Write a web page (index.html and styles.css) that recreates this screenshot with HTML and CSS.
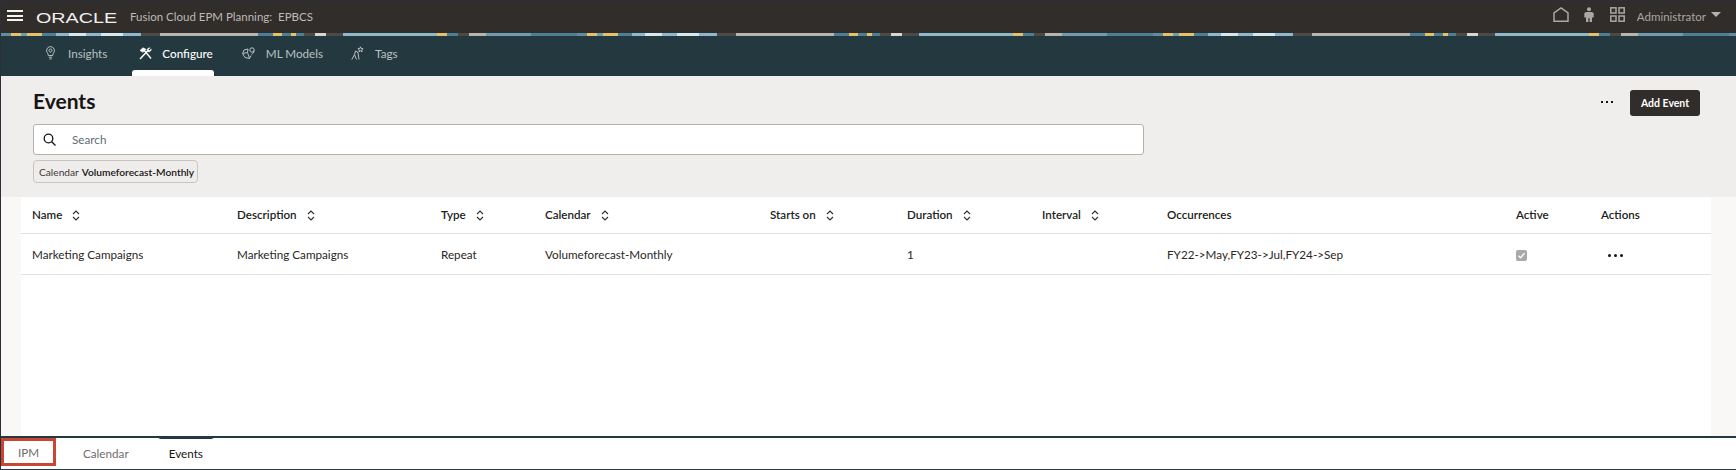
FILE: index.html
```html
<!DOCTYPE html>
<html lang="en">
<head>
<meta charset="utf-8">
<title>Events</title>
<link rel="stylesheet" href="styles.css">
</head>
<body>
<div class="app">
  <header class="topbar">
    <button class="hamburger" aria-label="Menu"><span></span><span></span><span></span></button>
    <span class="logo-box"><span class="logo">ORACLE</span></span>
    <span class="product">Fusion Cloud EPM Planning:&nbsp; EPBCS</span>
    <div class="top-actions">
      <svg class="ico-home" width="16" height="15" viewBox="0 0 16 15"><path d="M1 14.200V5.800L8 1l7 4.800v8.400z" fill="none" stroke="#aaa7a4" stroke-width="1.500"/></svg>
      <svg class="ico-person" width="10" height="15" viewBox="0 0 10 15"><circle cx="5" cy="2.200" r="2" fill="#aaa7a4"/><path d="M2 5h6l1.700 1.200v4.300H8V15H5.600v-3.800h-1.200V15H2v-4.500H.3V6.200z" fill="#aaa7a4"/></svg>
      <svg class="ico-grid" width="15" height="15" viewBox="0 0 15 15"><g fill="none" stroke="#aaa7a4" stroke-width="1.500"><rect x=".8" y=".8" width="5.200" height="5.200"/><rect x="9" y=".8" width="5.200" height="5.200"/><rect x=".8" y="9" width="5.200" height="5.200"/><rect x="9" y="9" width="5.200" height="5.200"/></g></svg>
      <span class="user">Administrator</span>
      <span class="caret"></span>
    </div>
  </header>
  <div class="strip"></div>
  <nav class="nav">
    <a class="nav-item item-insights">
      <svg width="9" height="14" viewBox="0 0 9 14"><g fill="none" stroke="#b9c0c2" stroke-width="1"><path d="M4.500.6A4 4 0 0 0 1.800 7.500l.5 2h4.400l.5-2A4 4 0 0 0 4.500.6z"/><circle cx="4.500" cy="4.500" r="1.500"/><path d="M2.800 11.200h3.400M3.400 13h2.200"/></g></svg>
      <span>Insights</span>
    </a>
    <a class="nav-item active item-configure">
      <svg width="13" height="13" viewBox="0 0 13 13"><g fill="none" stroke="#fff" stroke-width="1.400"><path d="M1 12 8.500 4"/><path d="M4.500 2.500 12 11.500"/><path d="M1 3.500 4 .8l3 1.500-3 3z" fill="#fff" stroke-width=".6"/><path d="M12.300 1.800 10.500 3.500 9.500 2.500 11 .8a2.700 2.700 0 0 0-3 3l1 1a2.700 2.700 0 0 0 3.300-3z" fill="#fff" stroke-width=".4"/></g></svg>
      <span>Configure</span>
    </a>
    <a class="nav-item item-ml">
      <svg width="13" height="12" viewBox="0 0 13 12"><g fill="none" stroke="#b9c0c2" stroke-width="1"><path d="M6 2 2 3 .6 6.500 3 10.500l4.500 1 1.500-3"/><path d="M.6 6.500 5.500 5.500 7.500 11.500M5.500 5.500 6 2"/><circle cx="10" cy="3" r="2.200"/><path d="M12 3.500c0 2-1 3-2.500 4"/></g></svg>
      <span>ML Models</span>
    </a>
    <a class="nav-item item-tags">
      <svg width="13" height="14" viewBox="0 0 13 14"><g fill="none" stroke="#b9c0c2" stroke-width="1"><path d="M.8 13.500 3.500 8.500 4.500 5 7 6.500 8 13.500"/><path d="M3.500 8.500 5.500 13.500"/><path d="M9.500.8l.7 1.700 1.900.2-1.400 1.200.4 1.900-1.600-1-1.600 1 .4-1.900L6.900 2.700l1.900-.2z"/></g></svg>
      <span>Tags</span>
    </a>
  </nav>
  <section class="page-head">
    <div class="title-row">
      <h1>Events</h1>
      <div class="head-actions">
        <span class="dots dots-small"><i></i><i></i><i></i></span>
        <button class="primary">Add Event</button>
      </div>
    </div>
    <div class="search">
      <svg width="13" height="13" viewBox="0 0 13 13"><circle cx="5.500" cy="5.500" r="4.300" fill="none" stroke="#161513" stroke-width="1.300"/><path d="M8.700 8.700 12.500 12.500" stroke="#161513" stroke-width="1.300"/></svg>
      <span>Search</span>
    </div>
    <div class="chip"><span>Calendar</span><b>Volumeforecast-Monthly</b></div>
  </section>
  <main class="content">
    <div class="panel">
    <table class="grid">
      <colgroup>
        <col class="c-name"><col class="c-desc"><col class="c-type"><col class="c-cal"><col class="c-start"><col class="c-dur"><col class="c-int"><col class="c-occ"><col class="c-act"><col class="c-actions">
      </colgroup>
      <thead>
        <tr>
          <th>Name<svg class="sort" viewBox="0 0 8 11"><path d="M1 4l3-3 3 3M1 7l3 3 3-3" fill="none" stroke="#312d2a" stroke-width="1.100"/></svg></th>
          <th>Description<svg class="sort" viewBox="0 0 8 11"><path d="M1 4l3-3 3 3M1 7l3 3 3-3" fill="none" stroke="#312d2a" stroke-width="1.100"/></svg></th>
          <th>Type<svg class="sort" viewBox="0 0 8 11"><path d="M1 4l3-3 3 3M1 7l3 3 3-3" fill="none" stroke="#312d2a" stroke-width="1.100"/></svg></th>
          <th>Calendar<svg class="sort" viewBox="0 0 8 11"><path d="M1 4l3-3 3 3M1 7l3 3 3-3" fill="none" stroke="#312d2a" stroke-width="1.100"/></svg></th>
          <th>Starts on<svg class="sort" viewBox="0 0 8 11"><path d="M1 4l3-3 3 3M1 7l3 3 3-3" fill="none" stroke="#312d2a" stroke-width="1.100"/></svg></th>
          <th>Duration<svg class="sort" viewBox="0 0 8 11"><path d="M1 4l3-3 3 3M1 7l3 3 3-3" fill="none" stroke="#312d2a" stroke-width="1.100"/></svg></th>
          <th>Interval<svg class="sort" viewBox="0 0 8 11"><path d="M1 4l3-3 3 3M1 7l3 3 3-3" fill="none" stroke="#312d2a" stroke-width="1.100"/></svg></th>
          <th>Occurrences</th>
          <th>Active</th>
          <th>Actions</th>
        </tr>
      </thead>
      <tbody>
        <tr>
          <td>Marketing Campaigns</td>
          <td>Marketing Campaigns</td>
          <td>Repeat</td>
          <td>Volumeforecast-Monthly</td>
          <td></td>
          <td>1</td>
          <td></td>
          <td>FY22-&gt;May,FY23-&gt;Jul,FY24-&gt;Sep</td>
          <td><span class="check"><svg width="9" height="9" viewBox="0 0 9 9"><path d="M1.500 4.800 3.500 6.800 7.500 2.200" fill="none" stroke="#fff" stroke-width="1.300"/></svg></span></td>
          <td><span class="dots dots-row"><i></i><i></i><i></i></span></td>
        </tr>
      </tbody>
    </table>
    </div>
  </main>
  <footer class="tabs">
    <a class="tab tab-ipm">IPM</a>
    <a class="tab tab-cal">Calendar</a>
    <a class="tab tab-ev">Events</a>
  </footer>
</div>
</body>
</html>
```

FILE: styles.css
```css
* { box-sizing: border-box; }
html, body { margin: 0; height: 100%; }
body { font-family: Lato, "Noto Sans", sans-serif; color: #161513; background: #fff; overflow: hidden; }
.app { height: 470px; display: flex; flex-direction: column; border-top: 1px solid #2b2f3a; border-left: 1px solid #2b2f3a; border-bottom: 1px solid #2b3a40; }

.topbar { height: 32px; flex: none; background: #312d2a; display: flex; align-items: center; color: #c4c1be; padding-left: 6px; }
.hamburger { width: 16px; height: 11px; padding: 0; border: 0; background: none; display: flex; flex-direction: column; justify-content: space-between; margin-top: -3px; flex: none; }
.hamburger span { display: block; height: 2px; background: #f5f4f2; }
.logo-box { width: 94px; margin-left: 13px; margin-top: -2px; flex: none; }
.logo { display: inline-block; font-family: "Liberation Sans", sans-serif; font-size: 14.500px; color: #f0efed; transform: scaleX(1.36); transform-origin: left center; }
.product { font-size: 11.500px; color: #bdbab7; margin-top: -2px; }
.top-actions { margin-left: auto; display: flex; align-items: center; padding-right: 15px; margin-top: -2px; }
.top-actions svg { display: block; flex: none; }
.ico-home { margin-right: 15px; margin-top: -3px; }
.ico-person { margin-right: 16px; margin-top: -3px; }
.ico-grid { margin-right: 12px; margin-top: -3px; }
.user { font-size: 11.500px; color: #a9a6a3; }
.caret { width: 0; height: 0; border-left: 5px solid transparent; border-right: 5px solid transparent; border-top: 5px solid #b5b2af; margin-left: 5px; margin-top: -3px; }

.strip { height: 3px; flex: none; background: repeating-linear-gradient(90deg,
  #5f8ea1 0 10px, #e8c06a 10px 20px, #6f9db0 20px 26px, #e8c06a 26px 41px, #4a7f96 41px 55px,
  #8db8c9 55px 68px, #d4e8f0 68px 85px, #8db8c9 85px 100px, #d4e8f0 100px 122px, #8db8c9 122px 140px,
  #4b4a48 140px 159px, #b8b5b0 159px 257px, #4a7f96 257px 272px, #e8c06a 272px 281px, #4a7f96 281px 290px,
  #e8c06a 290px 295px, #4a7f96 295px 303px, #4b4a48 303px 314px, #d8d6d3 314px 325px, #4b4a48 325px 342px,
  #8db8c9 342px 436px, #e8c06a 436px 446px, #4a7f96 446px 457px, #4b4a48 457px 468px, #b8b5b0 468px 485px,
  #6f9db0 485px 530px, #4a7f96 530px 576px); }

.nav { height: 40px; flex: none; background: #24393f; display: flex; padding-left: 38px; }
.nav-item { position: relative; display: flex; align-items: center; padding: 0 2px 6px 7px; margin-right: 23px; font-size: 11.700px; color: #b9c0c2; }
.nav-item svg { display: block; flex: none; }
.item-insights svg { margin-right: 13px; }
.item-configure { padding-right: 1px; margin-right: 21px; }
.item-configure svg { margin-right: 10px; }
.item-ml { margin-right: 19px; }
.item-ml svg { margin-right: 11px; }
.item-tags svg { margin-right: 11px; }
.nav-item.active { color: #fff; font-weight: 500; }
.nav-item.active::after { content: ""; position: absolute; left: 0; right: 0; bottom: 0; height: 6px; background: #fff; border-radius: 3px 3px 0 0; }

.page-head { height: 121px; flex: none; background: #f0eeec; padding: 11px 0 0 32px; }
.title-row { display: flex; align-items: center; justify-content: space-between; padding-right: 36px; height: 28px; }
h1 { margin: 0; font-size: 21px; font-weight: 700; line-height: 28px; }
.head-actions { display: flex; align-items: center; gap: 17px; margin-top: 2px; }
.primary { width: 70px; height: 26px; border: 0; border-radius: 3px; background: #312d2a; color: #fff; font: 700 10.500px Lato, sans-serif; padding: 0; margin-top: 1px; }
.dots { display: inline-flex; gap: 3px; }
.dots i { display: block; background: #161513; }
.dots-small i { width: 2px; height: 2px; }
.dots-row i { width: 3px; height: 3px; border-radius: 50%; }
.search { width: 1111px; height: 31px; margin-top: 9px; background: #fff; border: 1px solid #b5b2ae; border-radius: 3px; display: flex; align-items: center; padding-left: 9px; padding-bottom: 1px; gap: 16px; font-size: 11.700px; color: #5f6d70; }
.search svg { display: block; }
.chip { width: 165px; height: 23px; margin-top: 5px; border: 1px solid #c9c6c2; border-radius: 4px; background: #efedeb; display: flex; align-items: center; gap: 3px; padding-left: 5px; font-size: 10.200px; color: #3d3a38; white-space: nowrap; }
.chip b { font-weight: 600; color: #161513; }

.content { flex: 1; min-height: 0; padding: 0 25px 0 20px; background: #f9f8f6; }
.panel { height: 100%; background: #fff; }
.grid { width: 1690px; table-layout: fixed; border-collapse: collapse; font-size: 11.700px; }
.c-name { width: 205px; } .c-desc { width: 204px; } .c-type { width: 104px; } .c-cal { width: 225px; } .c-start { width: 137px; } .c-dur { width: 135px; } .c-int { width: 125px; } .c-occ { width: 349px; } .c-act { width: 85px; } .c-actions { width: 121px; }
.grid th { height: 36px; text-align: left; font-size: 11.600px; font-weight: 600; padding: 0 0 0 11px; border-bottom: 1px solid #e4e2e0; color: #201d1b; }
.grid td { height: 41px; padding: 0 0 0 11px; border-bottom: 1px solid #e4e2e0; color: #2a2725; vertical-align: middle; }
.sort { width: 8px; height: 11px; margin-left: 10px; vertical-align: -2px; }
.check { display: inline-flex; align-items: center; justify-content: center; width: 11px; height: 11px; background: #a9a9a9; border-radius: 2px; vertical-align: middle; }
.check svg { display: block; }
.dots-row { margin-left: 7px; vertical-align: middle; }

.tabs { height: 33px; flex: none; display: flex; align-items: stretch; border-top: 2px solid #24393f; font-size: 11.700px; background: #fff; }
.tab { display: flex; align-items: center; justify-content: center; color: #6f6c6a; }
.tab-ipm { width: 55px; height: 28px; border: 3px solid #c74634; }
.tab-cal { margin-left: 27px; height: 30px; }
.tab-ev { margin-left: 40px; height: 30px; color: #161513; position: relative; }
.tab-ev::before { content: ""; position: absolute; left: -11px; right: -11px; top: -2px; height: 3px; background: #24393f; border-radius: 0 0 3px 3px; }
```
